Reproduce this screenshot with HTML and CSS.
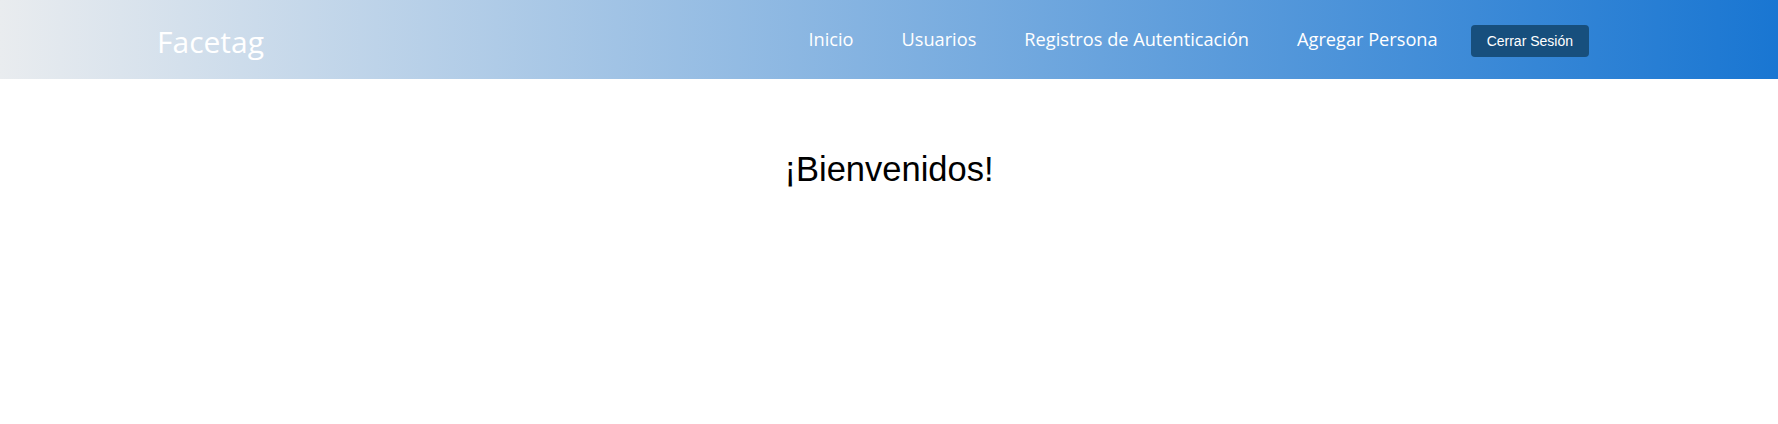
FILE: index.html
```html
<!DOCTYPE html>
<html lang="es">
<head>
<meta charset="utf-8">
<title>Facetag</title>
<link rel="stylesheet" href="styles.css">
</head>
<body>
<header class="topbar">
  <a class="brand" href="#">Facetag</a>
  <nav class="nav">
    <a class="nav-link" href="#">Inicio</a>
    <a class="nav-link" href="#">Usuarios</a>
    <a class="nav-link" href="#">Registros de Autenticación</a>
    <a class="nav-link" href="#">Agregar Persona</a>
    <button class="logout" type="button">Cerrar Sesión</button>
  </nav>
</header>
<main class="main">
  <h1 class="welcome">¡Bienvenidos!</h1>
</main>
</body>
</html>
```
FILE: styles.css
```css
html, body {
  margin: 0;
  padding: 0;
  background: #ffffff;
}

body {
  font-family: "Open Sans", "Noto Sans", sans-serif;
}

.topbar {
  height: 79px;
  box-sizing: border-box;
  display: flex;
  align-items: center;
  justify-content: space-between;
  padding: 0 189px 0 157px;
  background: linear-gradient(to right, #e9ecef 0%, #1976d2 100%);
}

.brand {
  color: #ffffff;
  text-decoration: none;
  font-size: 30px;
  line-height: 1;
  margin-top: 4px;
}

.nav {
  display: flex;
  align-items: center;
}

.nav-link {
  color: #ffffff;
  text-decoration: none;
  font-size: 18.2px;
  margin-right: 48px;
  margin-bottom: 2px;
}

.nav-link:last-of-type {
  margin-right: 33px;
}

.logout {
  height: 32px;
  padding: 0 16px;
  border: none;
  border-radius: 4px;
  background: #174f7d;
  color: #ffffff;
  font-family: "Liberation Sans", Arial, sans-serif;
  font-size: 14px;
  margin-top: 3px;
}

.main {
  display: flex;
  justify-content: center;
}

.welcome {
  margin: 71px 0 0;
  font-family: "Liberation Sans", Arial, sans-serif;
  font-weight: normal;
  font-size: 34.5px;
  color: #000000;
}
```
